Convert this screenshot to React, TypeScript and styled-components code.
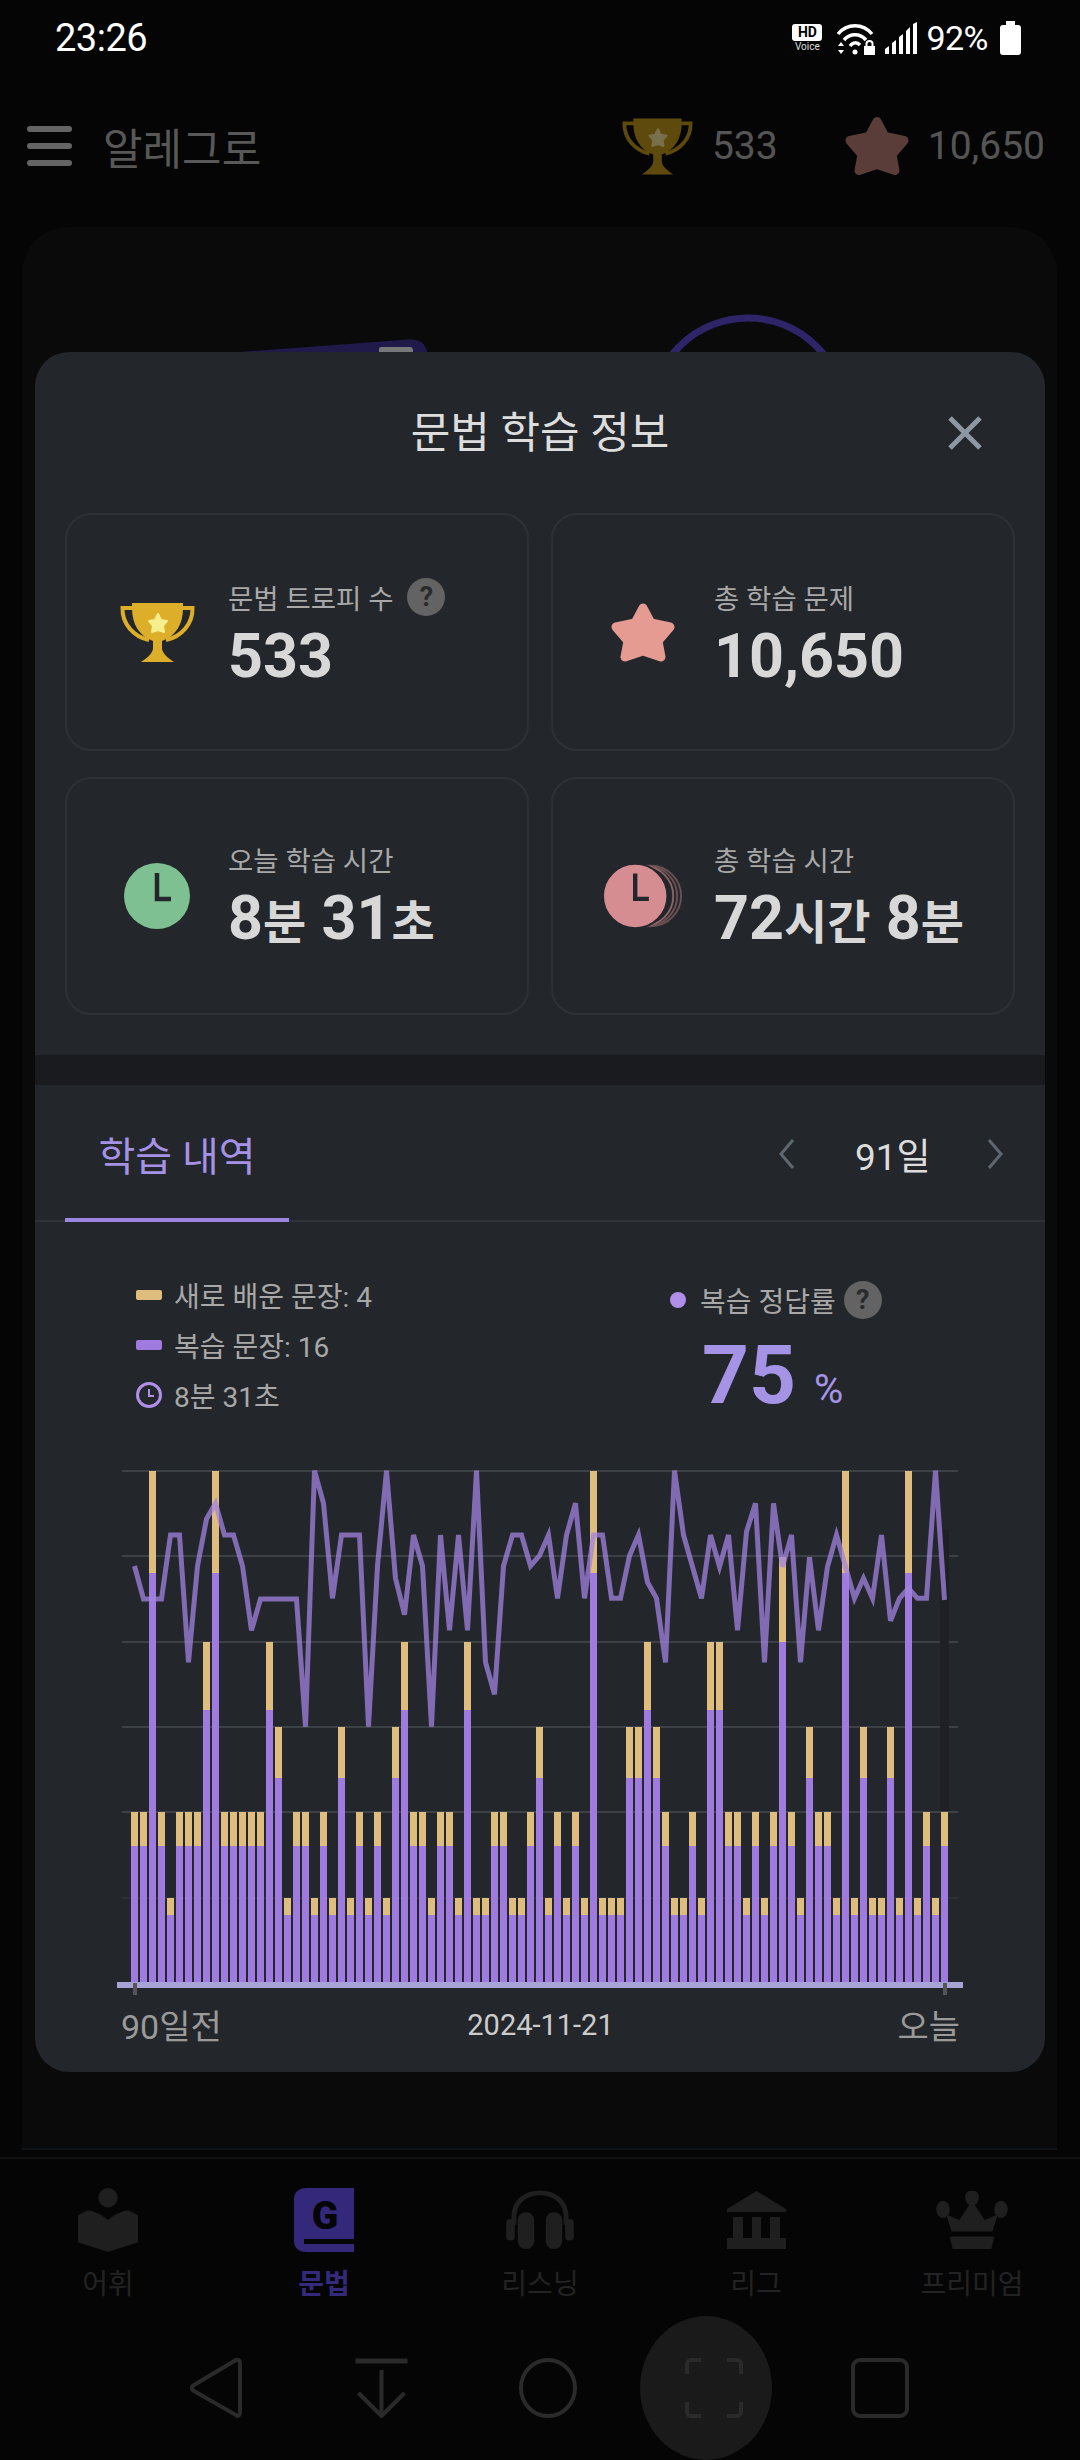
import React from 'react';
import styled, { createGlobalStyle } from 'styled-components';

const SANS = '"Roboto", "Noto Sans CJK KR", sans-serif';

// bar total height level per day, oldest first
const LEVELS = [
  2, 2, 5, 2, 1, 2, 2, 2, 4, 5, 2, 2, 2, 2, 2, 4, 3, 1, 2, 2, 1, 2, 1, 3, 1, 2, 1, 2, 1, 3,
  4, 2, 2, 1, 2, 2, 1, 4, 1, 1, 2, 2, 1, 1, 2, 3, 1, 2, 1, 2, 1, 5, 1, 1, 1, 3, 3, 4, 3, 2,
  1, 1, 2, 1, 4, 4, 2, 2, 1, 2, 1, 2, 6, 2, 1, 3, 2, 2, 1, 5, 1, 3, 1, 1, 3, 1, 5, 1, 2, 1, 2,
];

// [top of yellow, top of purple] in page pixels
const TOPS: Record<number, [number, number]> = {
  1: [1898, 1915],
  2: [1812, 1846],
  3: [1727, 1778],
  4: [1642, 1710],
  5: [1471, 1573],
  6: [1557, 1642],
};

// review accuracy line, in 1/3 px above the chart origin
const RATE = [
  348, 447, 447, 447, 255, 255, 637, 348, 207, 160, 255, 255, 348, 541, 447, 447, 447, 447, 447, 830,
  62, 160, 445, 255, 255, 255, 830, 348, 62, 385, 494, 255, 348, 830, 255, 541, 255, 541, 62, 637,
  733, 348, 255, 255, 348, 317, 255, 445, 255, 160, 445, 255, 255, 445, 445, 317, 255, 397, 445, 637,
  62, 255, 350, 445, 255, 350, 255, 541, 245, 160, 637, 160, 350, 255, 637, 322, 541, 350, 255, 350,
  445, 385, 445, 255, 512, 445, 415, 445, 445, 62, 450,
];

const GRID = [1471, 1556, 1642, 1727, 1812];

const GlobalStyle = createGlobalStyle`
  html, body {
    margin: 0;
    padding: 0;
    background: #050505;
  }
  * {
    box-sizing: border-box;
  }
`;

function StarShape({ fill, size, height }: { fill: string; size: number; height: number }) {
  return (
    <svg width={size} height={height} viewBox="0 0 64 61">
      <polygon
        points="32,6 40,21 59,25 47,39 50,55 32,49 14,55 17,39 5,25 24,21"
        fill={fill}
        stroke={fill}
        strokeWidth="9"
        strokeLinejoin="round"
      />
    </svg>
  );
}

function Trophy({ dim, width, height }: { dim?: boolean; width: number; height: number }) {
  const gold = dim ? '#5f4a0e' : '#dcae2a';
  const star = dim ? '#77704a' : '#f6ef8c';
  return (
    <svg width={width} height={height} viewBox="0 0 75 61">
      <path d="M13 6H2.5C2 22 14 35 29 38" fill="none" stroke={gold} strokeWidth="4" />
      <path d="M62 6H72.5C73 22 61 35 46 38" fill="none" stroke={gold} strokeWidth="4" />
      <path
        d="M12 1H63V6C63 22 56 34 42 39V47C43 52 48 56 54 60H21C27 56 32 52 33 47V39C19 34 12 22 12 6Z"
        fill={gold}
      />
      <polygon
        points="38,12 41,18 47,19 43,24 44,30 38,28 32,30 33,24 29,19 35,18"
        fill={star}
        stroke={star}
        strokeWidth="2"
        strokeLinejoin="round"
      />
    </svg>
  );
}

function ClockFace({ color }: { color: string }) {
  return (
    <svg width="66" height="66" viewBox="0 0 66 66">
      <circle cx="33" cy="33" r="33" fill={color} />
      <path d="M33 10V36H47" fill="none" stroke="#23262a" strokeWidth="4.5" />
    </svg>
  );
}

function StackedClock() {
  return (
    <svg width="82" height="66" viewBox="0 0 82 66">
      <circle cx="49" cy="33" r="31" fill="none" stroke="#6b5154" strokeWidth="2" />
      <circle cx="45" cy="33" r="31" fill="none" stroke="#6b5154" strokeWidth="2" />
      <circle cx="41" cy="33" r="31" fill="none" stroke="#8b6366" strokeWidth="2" />
      <circle cx="33" cy="33" r="33" fill="#d58d92" stroke="#23262a" strokeWidth="2" />
      <path d="M33 10V36H47" fill="none" stroke="#23262a" strokeWidth="4.5" />
    </svg>
  );
}

function HistoryChart() {
  const line = RATE.map((v, i) => `${134.5 + 9 * i},${(1450 + v / 3).toFixed(1)}`).join(' ');
  return (
    <ChartSvg viewBox="115 1465 850 535">
      {GRID.map(y => (
        <rect key={y} x="122" y={y - 1} width="836" height="2" fill="#3c4145" />
      ))}
      <rect x="122" y="1897" width="836" height="2" fill="#2e3134" />
      <rect x="940" y="1530" width="9" height="281" fill="#1e2023" />
      {LEVELS.map((level, i) => {
        const [top, mid] = TOPS[level];
        const x = 131 + 9 * i;
        return (
          <g key={i}>
            <rect x={x} y={top} width="7" height={mid - top} fill="#dfbd7f" />
            <rect x={x} y={mid} width="7" height={1983 - mid} fill="#9f7bdf" />
          </g>
        );
      })}
      <polyline
        points={line}
        fill="none"
        stroke="#a283e0"
        strokeOpacity="0.75"
        strokeWidth="5"
        strokeLinejoin="miter"
      />
      <rect x="117" y="1982" width="846" height="6" fill="#a7a3d6" />
      <rect x="133" y="1983" width="4" height="12" fill="#555" />
      <rect x="943" y="1983" width="4" height="12" fill="#555" />
    </ChartSvg>
  );
}

function VocabIcon() {
  return (
    <svg width="60" height="66" viewBox="0 0 62 66" fill="#1f1f1f">
      <ellipse cx="31" cy="10" rx="10" ry="10" />
      <path d="M0 28L10 23C18 24 25 28 31 33C37 28 44 24 52 23L62 28V56L31 66L0 56Z" />
    </svg>
  );
}

function GrammarIcon() {
  return (
    <svg width="60" height="66" viewBox="0 0 60 66">
      <path d="M12 1H60V65H12C4 65 0 60 0 54V12C0 5 5 1 12 1Z" fill="#33287a" />
      <rect x="10" y="52" width="50" height="5" fill="#050505" />
      <GrammarLetter x="31" y="42">G</GrammarLetter>
    </svg>
  );
}

function HeadphonesIcon() {
  return (
    <svg width="70" height="60" viewBox="0 0 70 62" fill="#1f1f1f">
      <path d="M8 36V28C8 12 20 3 35 3C50 3 62 12 62 28V36" fill="none" stroke="#1f1f1f" strokeWidth="5" />
      <rect x="12" y="23" width="17" height="38" rx="8" />
      <rect x="41" y="23" width="17" height="38" rx="8" />
      <rect x="0" y="30" width="9" height="22" rx="4" />
      <rect x="61" y="30" width="9" height="22" rx="4" />
    </svg>
  );
}

function BankIcon() {
  return (
    <svg width="59" height="58" viewBox="0 0 59 58" fill="#1f1f1f">
      <path d="M29.5 0L59 18V21H0V18Z" />
      <rect x="6" y="26" width="10" height="22" />
      <rect x="25" y="26" width="9" height="22" />
      <rect x="43" y="26" width="10" height="22" />
      <rect x="0" y="47" width="59" height="11" />
    </svg>
  );
}

function CrownIcon() {
  return (
    <svg width="76" height="58" viewBox="0 0 74 60" fill="#1f1f1f">
      <ellipse cx="37" cy="7" rx="7" ry="8" />
      <ellipse cx="7" cy="19" rx="7" ry="9" />
      <ellipse cx="67" cy="19" rx="7" ry="9" />
      <path d="M37 10L50 30L64 24L58 42H16L10 24L24 30Z" />
      <path d="M14 47H60L57 60H17Z" />
    </svg>
  );
}

const NAV_ITEMS = [
  { label: '어휘', icon: <VocabIcon /> },
  { label: '문법', icon: <GrammarIcon />, active: true },
  { label: '리스닝', icon: <HeadphonesIcon /> },
  { label: '리그', icon: <BankIcon /> },
  { label: '프리미엄', icon: <CrownIcon /> },
];

function App() {
  return (
    <>
      <GlobalStyle />
      <Screen>
        <StatusBar>
          <Clock>23:26</Clock>
          <StatusIcons>
            <HdBadge>
              <HdBox>HD</HdBox>
              <VoiceText>Voice</VoiceText>
            </HdBadge>
            <svg width="40" height="33" viewBox="0 0 40 33" fill="none" stroke="#fff">
              <path d="M2 12C11 1 27 1 36 12" strokeWidth="3.5" />
              <path d="M8 18C14 11 24 11 30 18" strokeWidth="3.5" />
              <path d="M14 24C17 20 21 20 24 23" strokeWidth="3.5" />
              <circle cx="19" cy="30" r="2.5" fill="#fff" stroke="none" />
              <rect x="28" y="24" width="11" height="9" fill="#fff" stroke="none" />
              <path d="M30.5 24V21.5C30.5 18 36.5 18 36.5 21.5V24" strokeWidth="2" />
              <path d="M2 24L5 20L8 24ZM2 28H8L5 32Z" fill="#fff" stroke="none" />
            </svg>
            <svg width="32" height="32" viewBox="0 0 32 32" fill="#fff">
              <path d="M0 32V27L4 24V32ZM7 32V21L11 18V32ZM14 32V15L18 12V32ZM21 32V9L25 5V32ZM28 32V2L32 0V32Z" />
            </svg>
            <BatteryPercent>92%</BatteryPercent>
            <Battery />
          </StatusIcons>
        </StatusBar>

        <Header>
          <MenuButton>
            <MenuBar />
            <MenuBar />
            <MenuBar />
          </MenuButton>
          <AppTitle>알레그로</AppTitle>
          <HeaderStat>
            <Trophy dim width={71} height={59} />
            <HeaderValue>533</HeaderValue>
          </HeaderStat>
          <HeaderStat>
            <StarShape fill="#5a3d39" size={64} height={62} />
            <HeaderValue>10,650</HeaderValue>
          </HeaderStat>
        </Header>

        <BackCard>
          <BackArt width="1035" height="140" viewBox="0 0 1035 140">
            <path d="M218 125L380 113C392 111 403 113 405 125Z" fill="#1f1a4a" />
            <path d="M357 125V122C357 120 359 120 361 120H388C391 120 391 123 391 125Z" fill="#777" />
            <circle cx="726" cy="188" r="97" fill="none" stroke="#2e2468" strokeWidth="7" />
          </BackArt>
        </BackCard>

        <BottomNav>
          {NAV_ITEMS.map(item => (
            <NavItem key={item.label}>
              <NavIcon>{item.icon}</NavIcon>
              <NavLabel $active={item.active}>{item.label}</NavLabel>
            </NavItem>
          ))}
        </BottomNav>

        <SystemKeys>
          <KeyIcon $width={52} viewBox="0 0 52 60">
            <path d="M48 2C50 2 50 4 50 6V54C50 57 48 59 46 57L4 33C1 31 1 29 4 27L46 2Z" />
          </KeyIcon>
          <KeyIcon $width={53} viewBox="0 0 52 60">
            <path d="M0 3H52" strokeWidth="5" />
            <path d="M26 12V58M3 35L26 58L49 35" />
          </KeyIcon>
          <KeyIcon $width={58} viewBox="0 0 58 60">
            <ellipse cx="29" cy="30" rx="27" ry="28" />
          </KeyIcon>
          <CapturePill>
            <CaptureIcon viewBox="0 0 58 60">
              <path d="M2 16V6C2 4 4 2 6 2H16M42 2H52C54 2 56 4 56 6V16M56 44V54C56 56 54 58 52 58H42M16 58H6C4 58 2 56 2 54V44" />
            </CaptureIcon>
          </CapturePill>
          <KeyIcon $width={58} viewBox="0 0 58 60">
            <rect x="2" y="2" width="54" height="56" rx="7" />
          </KeyIcon>
        </SystemKeys>

        <Modal>
          <ModalHeader>
            <ModalTitle>문법 학습 정보</ModalTitle>
            <CloseButton viewBox="0 0 36 36">
              <path d="M3 3L33 33M33 3L3 33" />
            </CloseButton>
          </ModalHeader>

          <StatGrid>
            <StatCard>
              <StatIcon>
                <Trophy width={75} height={61} />
              </StatIcon>
              <StatText>
                <StatLabel>
                  문법 트로피 수 <HelpBadge>?</HelpBadge>
                </StatLabel>
                <StatValue>533</StatValue>
              </StatText>
            </StatCard>
            <StatCard>
              <StatIcon>
                <StarShape fill="#e59b92" size={64} height={61} />
              </StatIcon>
              <StatText>
                <StatLabel>총 학습 문제</StatLabel>
                <StatValue>10,650</StatValue>
              </StatText>
            </StatCard>
            <StatCard>
              <StatIcon>
                <ClockFace color="#7fc092" />
              </StatIcon>
              <StatText>
                <StatLabel>오늘 학습 시간</StatLabel>
                <StatValue>
                  8<Unit>분</Unit> 31<Unit>초</Unit>
                </StatValue>
              </StatText>
            </StatCard>
            <StatCard>
              <StatIcon>
                <StackedClock />
              </StatIcon>
              <StatText>
                <StatLabel>총 학습 시간</StatLabel>
                <StatValue>
                  72<Unit>시간</Unit> 8<Unit>분</Unit>
                </StatValue>
              </StatText>
            </StatCard>
          </StatGrid>

          <Band />

          <TabRow>
            <ActiveTab>학습 내역</ActiveTab>
            <Pager>
              <PagerArrow viewBox="0 0 16 30">
                <path d="M14 1L2 15L14 29" />
              </PagerArrow>
              <PagerValue>91일</PagerValue>
              <PagerArrow viewBox="0 0 16 30">
                <path d="M2 1L14 15L2 29" />
              </PagerArrow>
            </Pager>
          </TabRow>

          <Summary>
            <Legend>
              <LegendRow>
                <Swatch $color="#dfbd7f" />새로 배운 문장: 4
              </LegendRow>
              <LegendRow>
                <Swatch $color="#9f7bdf" />복습 문장: 16
              </LegendRow>
              <LegendRow>
                <svg width="26" height="30" viewBox="0 0 26 26" fill="none" stroke="#b08fe8" strokeWidth="3">
                  <circle cx="13" cy="13" r="11.5" />
                  <path d="M13 7V14H18" strokeWidth="2" />
                </svg>
                8분 31초
              </LegendRow>
            </Legend>
            <Accuracy>
              <AccuracyLabel>
                <Dot />복습 정답률 <HelpBadge>?</HelpBadge>
              </AccuracyLabel>
              <AccuracyValue>
                75<Percent>%</Percent>
              </AccuracyValue>
            </Accuracy>
          </Summary>

          <HistoryChart />

          <AxisLabels>
            <AxisEnd>90일전</AxisEnd>
            <AxisDate>2024-11-21</AxisDate>
            <AxisEnd $right>오늘</AxisEnd>
          </AxisLabels>
        </Modal>
      </Screen>
    </>
  );
}

const Screen = styled.div`
  position: relative;
  width: 1080px;
  height: 2460px;
  overflow: hidden;
  display: flex;
  flex-direction: column;
  background: #050505;
  font-family: ${SANS};
`;

const StatusBar = styled.div`
  height: 76px;
  padding: 0 59px 0 55px;
  display: flex;
  align-items: center;
  justify-content: space-between;
  color: #fff;
`;

const Clock = styled.span`
  font-size: 38px;
  letter-spacing: -0.5px;
`;

const StatusIcons = styled.div`
  display: flex;
  align-items: center;
  gap: 9px;
`;

const HdBadge = styled.div`
  width: 30px;
  margin-right: 5px;
  display: flex;
  flex-direction: column;
  align-items: center;
`;

const HdBox = styled.span`
  width: 30px;
  height: 17px;
  border-radius: 3px;
  background: #fff;
  color: #000;
  font-size: 14px;
  font-weight: 700;
  line-height: 17px;
  text-align: center;
`;

const VoiceText = styled.span`
  font-size: 10px;
  line-height: 11px;
  color: #ddd;
`;

const BatteryPercent = styled.span`
  font-size: 34px;
  letter-spacing: -0.5px;
`;

const Battery = styled.span`
  position: relative;
  width: 21px;
  height: 30px;
  margin: 3px 0 0 3px;
  border-radius: 3px;
  background: #fff;
  &::before {
    content: '';
    position: absolute;
    top: -4px;
    left: 6px;
    width: 9px;
    height: 4px;
    background: #fff;
  }
`;

const Header = styled.div`
  height: 140px;
  padding: 0 35px 0 27px;
  display: flex;
  align-items: center;
`;

const MenuButton = styled.div`
  width: 45px;
  height: 40px;
  display: flex;
  flex-direction: column;
  justify-content: space-between;
`;

const MenuBar = styled.span`
  height: 6px;
  border-radius: 3px;
  background: #646464;
`;

const AppTitle = styled.h1`
  flex: 1;
  margin: 0 0 0 31px;
  font-size: 43px;
  font-weight: 400;
  color: #585858;
`;

const HeaderStat = styled.div`
  display: flex;
  align-items: center;
  gap: 19px;
  margin-left: 67px;
`;

const HeaderValue = styled.span`
  font-size: 39px;
  color: #555;
`;

const BackCard = styled.div`
  position: relative;
  height: 1923px;
  margin: 11px 23px 7px 22px;
  overflow: hidden;
  border-radius: 46px 46px 0 0;
  border-bottom: 2px solid #101416;
  background: #0a0a0b;
`;

const BackArt = styled.svg`
  display: block;
`;

const BottomNav = styled.nav`
  height: 148px;
  padding: 28px 0 0 0;
  display: grid;
  grid-template-columns: repeat(5, 216px);
  border-top: 2px solid #101214;
`;

const NavItem = styled.div`
  display: flex;
  flex-direction: column;
  align-items: center;
`;

const NavIcon = styled.div`
  height: 66px;
  display: flex;
  align-items: center;
`;

const NavLabel = styled.span<{ $active?: boolean }>`
  margin-top: 14px;
  font-size: 28px;
  line-height: 36px;
  font-weight: ${props => (props.$active ? 700 : 400)};
  color: ${props => (props.$active ? '#34297a' : '#232323')};
`;

const GrammarLetter = styled.text`
  font-family: ${SANS};
  font-size: 39px;
  font-weight: 900;
  text-anchor: middle;
  fill: #050505;
`;

const SystemKeys = styled.div`
  flex: 1;
  padding-left: 190px;
  display: grid;
  grid-template-columns: 165px 164px 121px 211px 58px;
  align-items: start;
`;

const KeyIcon = styled.svg<{ $width: number }>`
  width: ${props => props.$width}px;
  height: 60px;
  margin-top: 53px;
  fill: none;
  stroke: #2a2a2a;
  stroke-width: 4;
`;

const CapturePill = styled.div`
  width: 132px;
  height: 144px;
  margin-top: 11px;
  padding-left: 16px;
  display: flex;
  align-items: center;
  justify-content: center;
  border-radius: 50%;
  background: #1a1a1a;
`;

const CaptureIcon = styled.svg`
  width: 58px;
  height: 60px;
  fill: none;
  stroke: #2a2a2a;
  stroke-width: 4;
`;

const Modal = styled.section`
  position: absolute;
  top: 352px;
  left: 35px;
  width: 1010px;
  height: 1720px;
  overflow: hidden;
  border-radius: 34px;
  background: #23262a;
`;

const ModalHeader = styled.header`
  position: relative;
  height: 161px;
  padding-bottom: 8px;
  display: flex;
  align-items: center;
  justify-content: center;
`;

const ModalTitle = styled.h2`
  margin: 0;
  font-size: 43px;
  font-weight: 400;
  color: #dddddd;
`;

const CloseButton = styled.svg`
  position: absolute;
  top: 63px;
  right: 62px;
  width: 36px;
  height: 36px;
  fill: none;
  stroke: #8d98a2;
  stroke-width: 5;
`;

const StatGrid = styled.div`
  padding: 0 30px;
  display: grid;
  grid-template-columns: repeat(2, 464px);
  grid-auto-rows: 238px;
  gap: 26px 22px;
`;

const StatCard = styled.article`
  padding-left: 50px;
  display: flex;
  align-items: center;
  gap: 31px;
  border: 2px solid #2e3135;
  border-radius: 26px;
`;

const StatIcon = styled.div`
  width: 80px;
  display: flex;
  justify-content: center;
`;

const StatText = styled.div`
  display: flex;
  flex-direction: column;
`;

const StatLabel = styled.div`
  height: 40px;
  display: flex;
  align-items: center;
  gap: 6px;
  font-size: 27.5px;
  color: #a8a8a8;
`;

const StatValue = styled.div`
  margin-top: 8px;
  font-size: 61px;
  line-height: 62px;
  font-weight: 700;
  color: #d8d8d8;
`;

const Unit = styled.span`
  font-size: 47px;
`;

const HelpBadge = styled.span`
  width: 38px;
  height: 38px;
  margin-left: 8px;
  border-radius: 50%;
  background: #636363;
  color: #2a2a2a;
  font-size: 27px;
  font-weight: 700;
  line-height: 38px;
  text-align: center;
`;

const Band = styled.div`
  height: 30px;
  margin-top: 40px;
  background: #191b1e;
`;

const TabRow = styled.div`
  height: 137px;
  padding: 0 42px 0 30px;
  display: flex;
  align-items: stretch;
  justify-content: space-between;
  border-bottom: 2px solid #2f3236;
`;

const ActiveTab = styled.div`
  width: 224px;
  height: 137px;
  padding-top: 4px;
  display: flex;
  align-items: center;
  justify-content: center;
  border-bottom: 4px solid #9b85e0;
  font-size: 40px;
  color: #a592e6;
`;

const Pager = styled.div`
  height: 135px;
  padding-top: 2px;
  display: flex;
  align-items: center;
  gap: 60px;
`;

const PagerArrow = styled.svg`
  width: 16px;
  height: 30px;
  fill: none;
  stroke: #5f6870;
  stroke-width: 3;
`;

const PagerValue = styled.span`
  width: 72px;
  white-space: nowrap;
  font-size: 37px;
  color: #dddddd;
`;

const Summary = styled.div`
  height: 243px;
  padding: 48px 0 0 101px;
  display: flex;
`;

const Legend = styled.div`
  width: 534px;
  display: flex;
  flex-direction: column;
`;

const LegendRow = styled.div`
  height: 50px;
  display: flex;
  align-items: center;
  gap: 12px;
  font-size: 28px;
  color: #a8a8a8;
`;

const Swatch = styled.span<{ $color: string }>`
  width: 26px;
  height: 10px;
  border-radius: 2px;
  background: ${props => props.$color};
`;

const Accuracy = styled.div`
  display: flex;
  flex-direction: column;
`;

const AccuracyLabel = styled.div`
  height: 60px;
  display: flex;
  align-items: center;
  font-size: 28px;
  color: #a8a8a8;
`;

const Dot = styled.span`
  width: 16px;
  height: 16px;
  margin-right: 14px;
  border-radius: 50%;
  background: #b08fe8;
`;

const AccuracyValue = styled.div`
  margin: 0 0 0 32px;
  font-size: 82px;
  line-height: 90px;
  font-weight: 700;
  color: #a594e6;
`;

const Percent = styled.span`
  margin-left: 18px;
  font-size: 40px;
  font-weight: 400;
`;

const ChartSvg = styled.svg`
  display: block;
  width: 850px;
  height: 535px;
  margin-left: 80px;
`;

const AxisLabels = styled.div`
  height: 44px;
  padding: 0 85px 0 86px;
  display: grid;
  grid-template-columns: 1fr auto 1fr;
  align-items: center;
`;

const AxisEnd = styled.span<{ $right?: boolean }>`
  font-size: 34px;
  color: #9a9a9a;
  text-align: ${props => (props.$right ? 'right' : 'left')};
`;

const AxisDate = styled.span`
  font-size: 29px;
  color: #cccccc;
`;

export default App;
